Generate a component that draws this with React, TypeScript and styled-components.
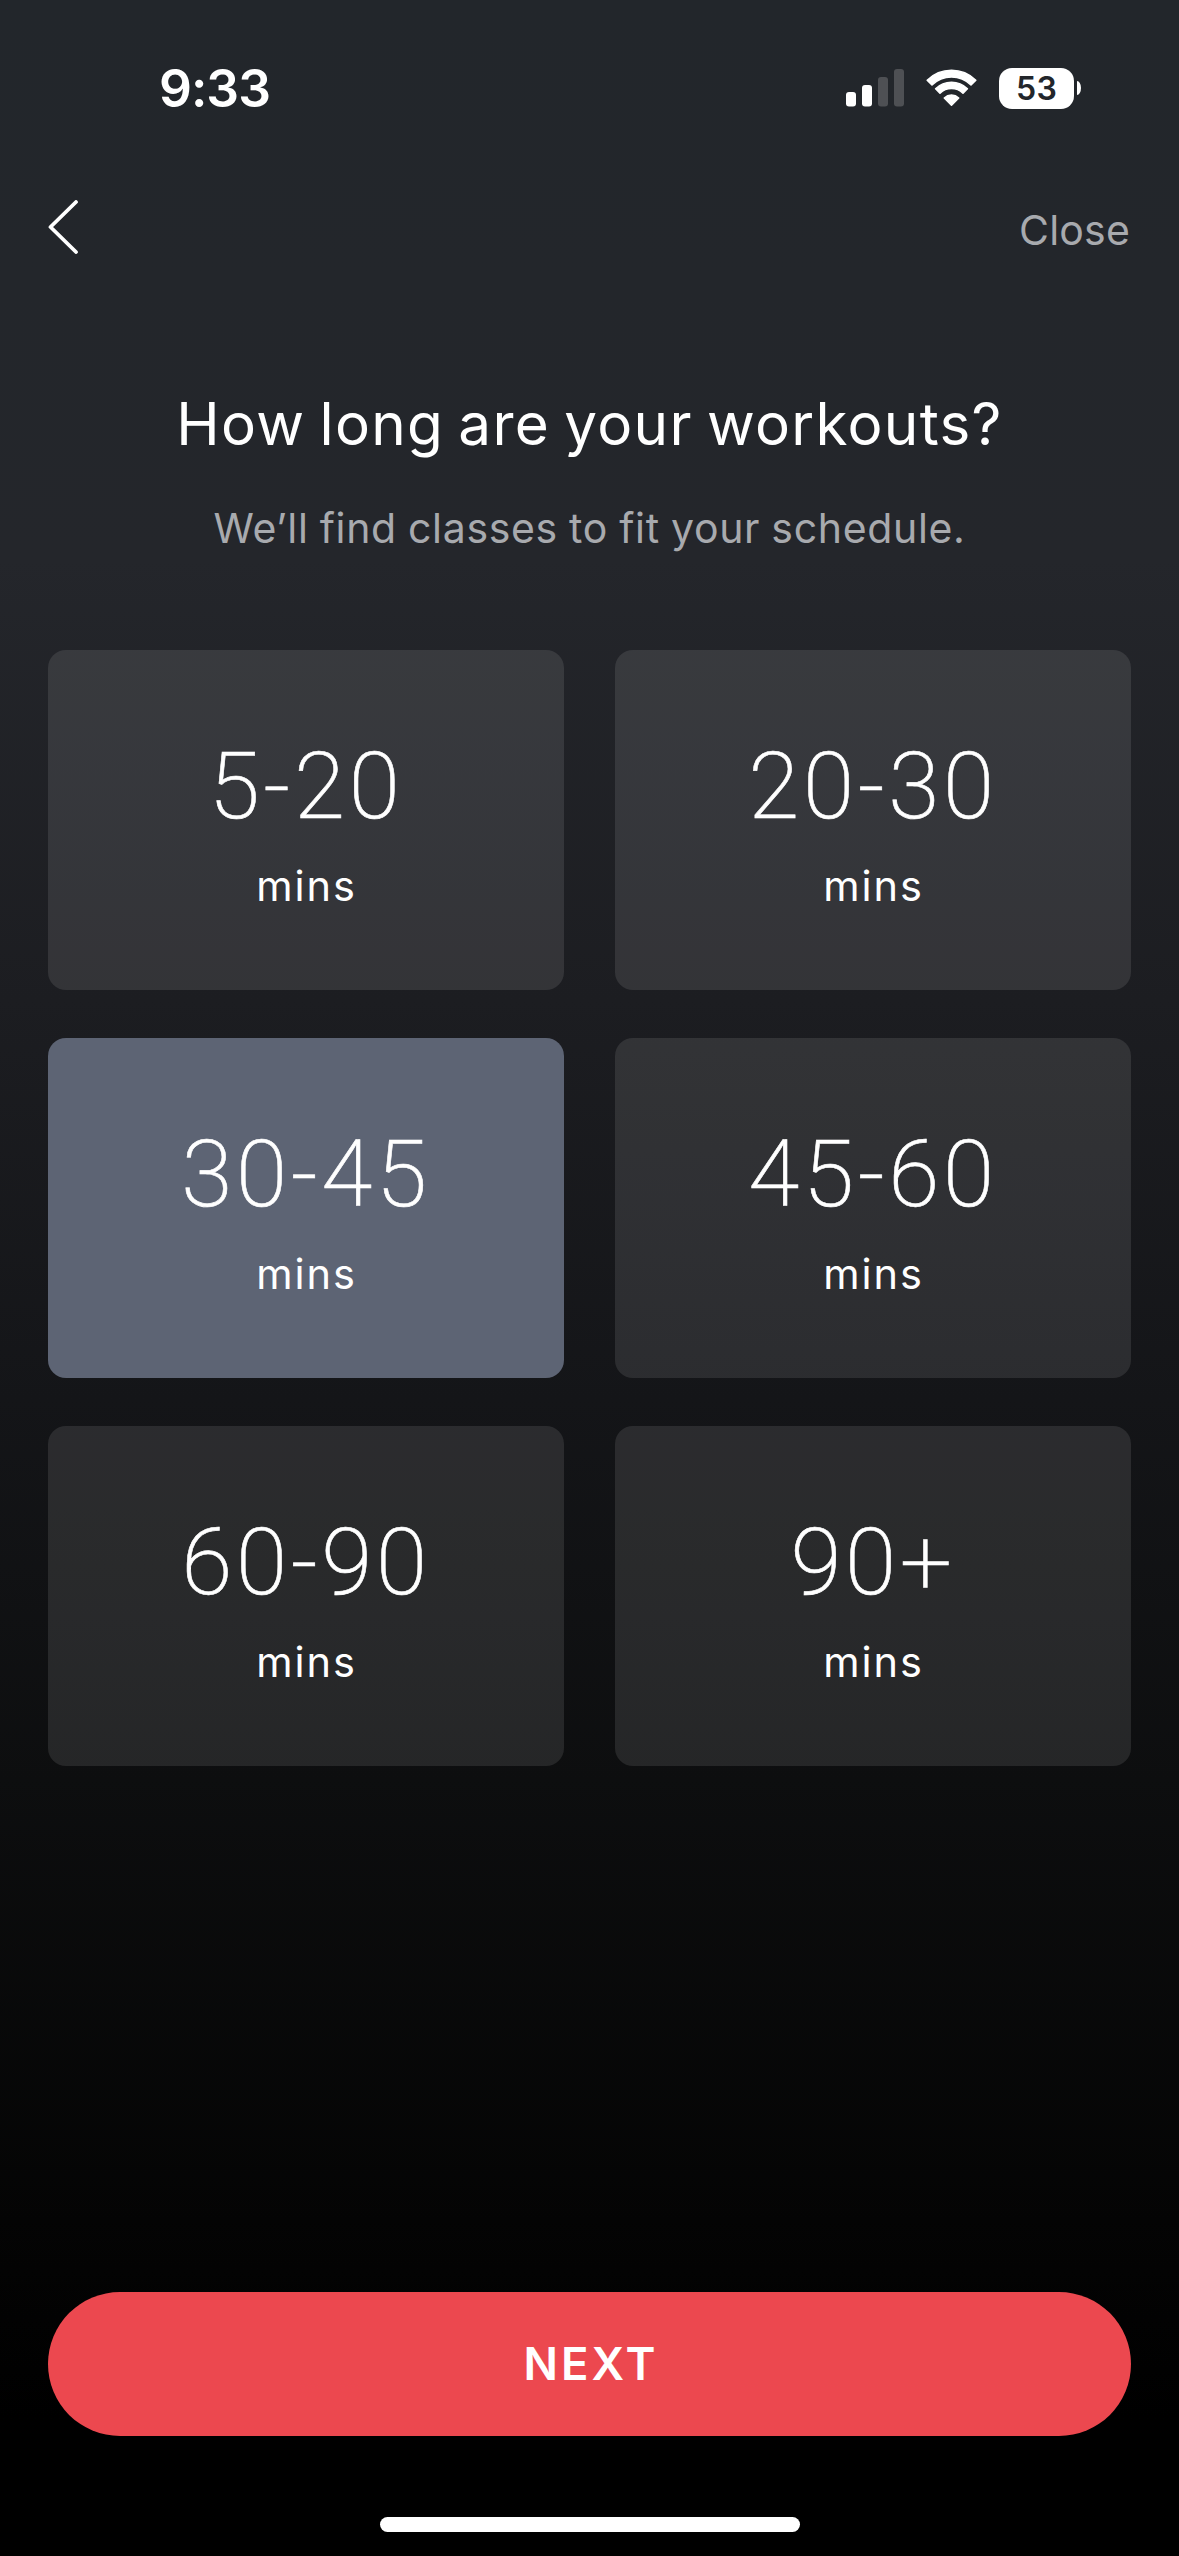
import React, { useState } from "react";
import styled, { createGlobalStyle } from "styled-components";

const GlobalStyle = createGlobalStyle`
  * { box-sizing: border-box; }
  body { margin: 0; background: #000; }
  button { appearance: none; border: 0; padding: 0; background: none; color: inherit; font: inherit; cursor: pointer; }
`;

const Screen = styled.main`
  display: flex;
  flex-direction: column;
  width: 1179px;
  height: 2556px;
  overflow: hidden;
  color: #fff;
  font-family: Inter, "Noto Sans", sans-serif;
  background: linear-gradient(
    180deg,
    #22262b 0px,
    #24262b 560px,
    #1c1d21 1000px,
    #141518 1400px,
    #0d0e0f 1780px,
    #040404 2220px,
    #000 2420px
  );
`;

const StatusBar = styled.header`
  display: flex;
  align-items: center;
  justify-content: space-between;
  height: 176px;
  padding: 0 98px 0 159px;
`;

const Clock = styled.time`
  font-size: 51.5px;
  line-height: 60px;
  font-weight: 600;
  letter-spacing: -1px;
`;

const Indicators = styled.div`
  display: flex;
  align-items: center;
  height: 42px;
`;

const SignalIcon = styled.svg`
  width: 58px;
  height: 38px;
`;

const WifiIcon = styled.svg`
  width: 51px;
  height: 38px;
  margin-left: 22px;
`;

const Battery = styled.div`
  display: flex;
  align-items: center;
  gap: 3px;
  margin-left: 22px;
`;

const BatteryBody = styled.div`
  width: 75px;
  height: 41px;
  border-radius: 13px;
  background: #fff;
  color: #22262b;
  font-size: 32px;
  line-height: 41px;
  font-weight: 600;
  letter-spacing: 0.3px;
  text-align: center;
`;

const BatteryTip = styled.div`
  width: 4px;
  height: 14px;
  border-radius: 0 4px 4px 0 / 0 7px 7px 0;
  background: #fff;
`;

const NavBar = styled.nav`
  display: flex;
  align-items: center;
  justify-content: space-between;
  height: 110px;
  padding: 0 49px 0 48px;
`;

const BackButton = styled.button`
  display: flex;
  padding-bottom: 9px;
`;

const CloseButton = styled.button`
  padding-bottom: 2px;
  color: #a8aaae;
  font-size: 41px;
  line-height: 50px;
  letter-spacing: 0.2px;
`;

const Heading = styled.section`
  display: flex;
  flex-direction: column;
  align-items: center;
  gap: 49px;
  padding-top: 108px;
`;

const Title = styled.h1`
  margin: 0;
  font-size: 58.4px;
  line-height: 60px;
  font-weight: 430;
  letter-spacing: 1.3px;
  word-spacing: -3.5px;
`;

const Subtitle = styled.p`
  margin: 0;
  color: #a8aaae;
  font-size: 41px;
  line-height: 50px;
  letter-spacing: 0.67px;
  word-spacing: -1px;
`;

const OptionGrid = styled.div`
  display: grid;
  grid-template-columns: 516px 516px;
  grid-auto-rows: 340px;
  gap: 48px 51px;
  margin-top: 97px;
  padding: 0 48px;
`;

const Option = styled.button<{ $selected: boolean }>`
  display: flex;
  flex-direction: column;
  align-items: center;
  justify-content: flex-start;
  gap: 19px;
  padding-top: 82px;
  border-radius: 18px;
  background: ${(p) => (p.$selected ? "#5d6474" : "rgba(255, 255, 255, 0.1)")};
`;

const Range = styled.span`
  font-family: Roboto, Inter, sans-serif;
  font-size: 92.8px;
  line-height: 110px;
  font-weight: 200;
  letter-spacing: 3.6px;
  -webkit-text-stroke: 0.6px #fff;
`;

const Unit = styled.span`
  padding-left: 1px;
  font-size: 41.5px;
  line-height: 50px;
  font-weight: 430;
  letter-spacing: 1.9px;
`;

const Footer = styled.footer`
  display: flex;
  flex-direction: column;
  align-items: center;
  gap: 81px;
  margin-top: auto;
  padding: 0 48px 24px;
`;

const NextButton = styled.button`
  width: 1083px;
  height: 144px;
  padding-left: 3px;
  border-radius: 72px;
  background: #ec484f;
  font-size: 45.4px;
  line-height: 60px;
  font-weight: 600;
  letter-spacing: 3.1px;
`;

const HomeIndicator = styled.div`
  width: 420px;
  height: 15px;
  border-radius: 8px;
  background: #fff;
`;

const RANGES = ["5-20", "20-30", "30-45", "45-60", "60-90", "90+"];

export default function App() {
  const [selected, setSelected] = useState("30-45");

  return (
    <>
      <GlobalStyle />
      <Screen>
        <StatusBar>
          <Clock>9:33</Clock>
          <Indicators>
            <SignalIcon viewBox="0 0 58 38">
              <rect x="0" y="23" width="10" height="14.5" rx="3" fill="#fff" />
              <rect x="16" y="16" width="10" height="21.5" rx="3" fill="#fff" />
              <rect x="32" y="8" width="10" height="29.5" rx="3" fill="#4e5054" />
              <rect x="48" y="0" width="10" height="37.5" rx="3" fill="#4e5054" />
            </SignalIcon>
            <WifiIcon viewBox="0 0 51 38" fill="#fff" stroke="#fff" strokeWidth="1.6" strokeLinejoin="round">
              <path d="M1.2 11.2A34.5 34.5 0 0 1 49.8 11.2L45 16A27.6 27.6 0 0 0 6 16Z" />
              <path d="M9.6 19.8A22.6 22.6 0 0 1 41.4 19.8L37 24.2A16.4 16.4 0 0 0 14 24.2Z" />
              <path d="M18.3 29A10.5 10.5 0 0 1 32.7 29L25.5 36.2Z" />
            </WifiIcon>
            <Battery>
              <BatteryBody>53</BatteryBody>
              <BatteryTip />
            </Battery>
          </Indicators>
        </StatusBar>

        <NavBar>
          <BackButton aria-label="Back">
            <svg width="32" height="54" viewBox="0 0 32 54" fill="none" stroke="#fff" strokeWidth="3.8" strokeLinecap="round" strokeLinejoin="round">
              <path d="M28 2L2.5 27L28 52" />
            </svg>
          </BackButton>
          <CloseButton>Close</CloseButton>
        </NavBar>

        <Heading>
          <Title>How long are your workouts?</Title>
          <Subtitle>We’ll find classes to fit your schedule.</Subtitle>
        </Heading>

        <OptionGrid>
          {RANGES.map((range) => (
            <Option key={range} $selected={range === selected} onClick={() => setSelected(range)}>
              <Range>{range}</Range>
              <Unit>mins</Unit>
            </Option>
          ))}
        </OptionGrid>

        <Footer>
          <NextButton>NEXT</NextButton>
          <HomeIndicator />
        </Footer>
      </Screen>
    </>
  );
}
